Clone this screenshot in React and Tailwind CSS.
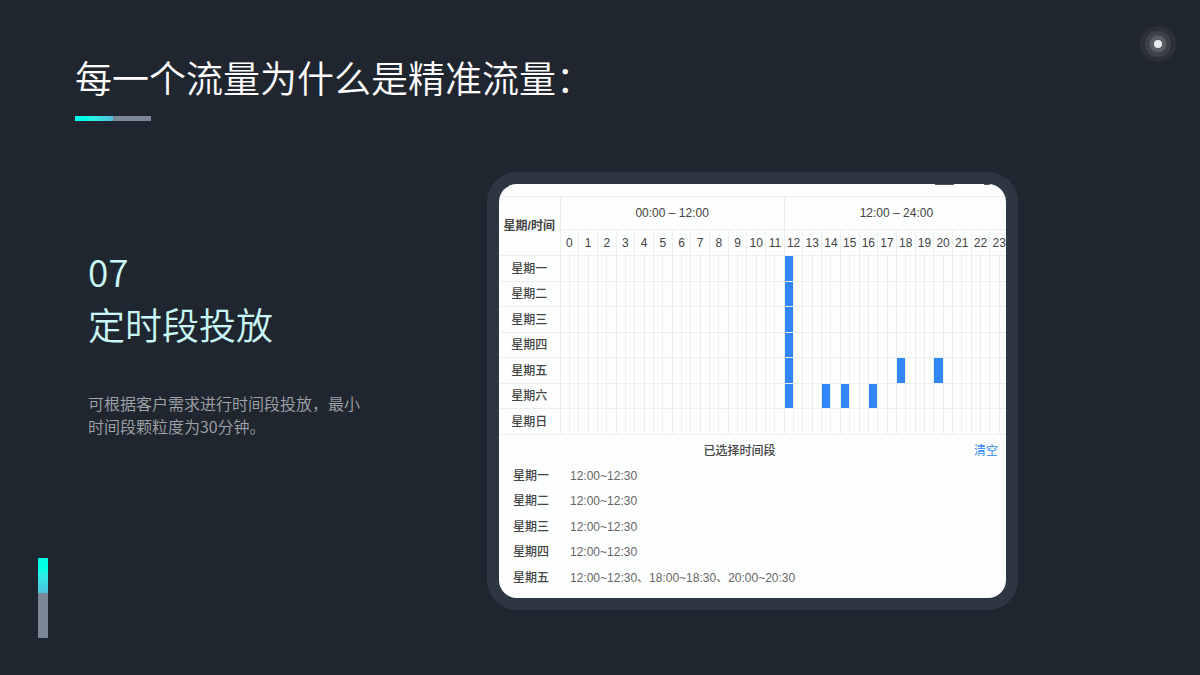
import { useState } from "react";

const days = ["一", "二", "三", "四", "五", "六", "日"];
const hours = Array.from({ length: 24 }, (_, i) => i);
const halfHours = Array.from({ length: 48 }, (_, i) => i);

// Half-hour slots per day, 24 = 12:00
const initialSlots = [[24], [24], [24], [24], [24, 36, 40], [24, 28, 30, 33], []];

const formatTime = (slot) => `${Math.floor(slot / 2)}:${slot % 2 ? "30" : "00"}`;

const formatSlots = (slots) =>
  slots.map((s) => `${formatTime(s)}~${formatTime(s + 1)}`).join("、");

function ScheduleTable({ slots }) {
  return (
    <table className="w-[calc(100%+3px)] table-fixed border-collapse text-center text-xs text-[#444]">
      <colgroup>
        <col className="w-[61px]" />
        {halfHours.map((h) => (
          <col key={h} />
        ))}
      </colgroup>
      <thead>
        <tr className="h-[33px]">
          <th rowSpan={2} className="border-y border-r border-[#ebf0ef] p-0 font-bold whitespace-nowrap">
            星期/时间
          </th>
          <th colSpan={24} scope="colgroup" className="border border-[#ebf0ef] font-medium">
            00:00 – 12:00
          </th>
          <th colSpan={24} scope="colgroup" className="border border-[#ebf0ef] font-medium">
            12:00 – 24:00
          </th>
        </tr>
        <tr className="h-[26px]">
          {hours.map((h) => (
            <th key={h} colSpan={2} scope="col" className="border border-[#ebf0ef] p-0 font-medium">
              {h}
            </th>
          ))}
        </tr>
      </thead>
      <tbody>
        {days.map((day, d) => (
          <tr key={day} className="h-[25px] odd:h-[26px]">
            <th scope="row" className="border-y border-r border-[#ebf0ef] p-0 font-medium">
              星期{day}
            </th>
            {halfHours.map((h) => (
              <td
                key={h}
                className={
                  slots[d].includes(h)
                    ? "border-y border-[#ebf0ef] bg-[#2f87fb] p-0"
                    : "border border-[#ebf0ef] p-0"
                }
              />
            ))}
          </tr>
        ))}
      </tbody>
    </table>
  );
}

function SchedulePanel() {
  const [slots, setSlots] = useState(initialSlots);

  const listed = days.slice(0, 5);

  return (
    <section className="mr-[182px] min-w-0 flex-1 rounded-[30px] bg-[#2d3743] p-3 font-['Liberation_Sans','Noto_Sans_CJK_SC',sans-serif]">
      <div className="overflow-hidden rounded-[18px] bg-[#fdfefe] pb-2">
        {/* Bottom edge of the toolbar that is scrolled away */}
        <div className="flex h-3 items-start justify-end gap-[30px] pr-4">
          <span className="h-px w-[19px] bg-[#555]" />
          <span className="h-px w-1.5 bg-[#555]" />
        </div>
        <ScheduleTable slots={slots} />

        {/* Selected times */}
        <div className="flex h-7 items-center pt-1 pr-2 pl-1.5 text-xs">
          <h3 className="flex-1 text-center font-medium text-[#444]">已选择时间段</h3>
          <button
            type="button"
            className="cursor-pointer text-[#2f87fb]"
            onClick={() => setSlots(days.map(() => []))}
          >
            清空
          </button>
        </div>
        <dl className="pl-3.5 text-xs">
          {listed.map((day, d) => (
            <div key={day} className="flex h-[25px] items-center even:h-[26px]">
              <dt className="w-[57px] font-medium text-[#444]">星期{day}</dt>
              <dd className="text-[#666]">{formatSlots(slots[d])}</dd>
            </div>
          ))}
        </dl>
      </div>
    </section>
  );
}

export default function App() {
  return (
    <div className="flex min-h-screen bg-[#20262f] font-['Noto_Sans_CJK_SC',sans-serif]">
      {/* Left rail */}
      <aside className="flex w-[75px] shrink-0 flex-col justify-end pb-[37px] pl-[38px]">
        <div className="h-[35px] w-2.5 bg-linear-to-b from-[#00ffe6] from-30% to-[#4cc0dc]" />
        <div className="h-[45px] w-2.5 bg-[#7b8796]" />
      </aside>

      <div className="min-w-0 flex-1">
        <header className="flex h-[172px] items-start justify-between pt-[26px] pr-6">
          <div className="pt-6">
            <h1 className="text-[37px] leading-[54px] font-[350] whitespace-nowrap text-white">
              每一个流量为什么是精准流量：
            </h1>
            <div className="mt-3 flex h-[5px] w-[76px]">
              <div className="flex-1 bg-linear-to-r from-[#00ffe6] from-30% to-[#4cc0dc]" />
              <div className="flex-1 bg-[#7b8796]" />
            </div>
          </div>
          <svg className="size-9" viewBox="0 0 36 36" aria-hidden="true">
            <circle cx="18" cy="18" r="18" fill="#2b3039" />
            <circle cx="18" cy="18" r="13" fill="#3c4149" />
            <circle cx="18" cy="18" r="8.5" fill="#5a5e65" />
            <circle cx="18" cy="18" r="4" fill="#e9ecec" />
          </svg>
        </header>

        <main className="flex items-start">
          <div className="w-[412px] shrink-0 pt-[73px] pl-[13px]">
            <h2 className="text-[37px] leading-[53px] font-[350] text-[#c9f8f6]">
              07
              <br />
              定时段投放
            </h2>
            <p className="mt-[41px] w-[280px] text-base leading-[23px] font-[350] text-[#a0a5ab]">
              可根据客户需求进行时间段投放，最小时间段颗粒度为30分钟。
            </p>
          </div>
          <SchedulePanel />
        </main>
      </div>
    </div>
  );
}
